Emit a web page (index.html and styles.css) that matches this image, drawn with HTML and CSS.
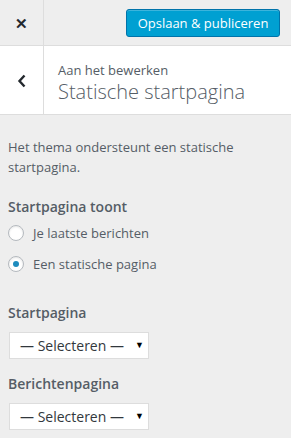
FILE: index.html
```html
<!DOCTYPE html>
<html lang="nl">
<head>
    <meta charset="UTF-8">
    <meta name="viewport" content="width=device-width, initial-scale=1.0">
    <title>Statische startpagina</title>
    <link rel="stylesheet" href="styles.css">
</head>
<body>
    <div class="customizer">
        <!-- Kop met sluiten en publiceren -->
        <div class="header">
            <div class="close">&#x2715;</div>
            <div class="header-actions">
                <button class="publish">Opslaan &amp; publiceren</button>
            </div>
        </div>

        <!-- Sectietitel -->
        <div class="section-title">
            <div class="back">
                <svg width="10" height="14" viewBox="0 0 10 14"><path d="M7.5 1.5 L2.5 7 L7.5 12.5" fill="none" stroke="#23282d" stroke-width="2.4"/></svg>
            </div>
            <div class="title-text">
                <span class="editing">Aan het bewerken</span>
                <h2>Statische startpagina</h2>
            </div>
        </div>

        <!-- Instellingen -->
        <div class="content">
            <p class="description">Het thema ondersteunt een statische startpagina.</p>

            <div class="control">
                <span class="control-title">Startpagina toont</span>
                <label class="radio"><span class="radio-dot"></span>Je laatste berichten</label>
                <label class="radio"><span class="radio-dot checked"></span>Een statische pagina</label>
            </div>

            <div class="control select-control">
                <span class="control-title">Startpagina</span>
                <div class="select">— Selecteren —<span class="arrow">&#9660;</span></div>
            </div>

            <div class="control select-control">
                <span class="control-title">Berichtenpagina</span>
                <div class="select">— Selecteren —<span class="arrow">&#9660;</span></div>
            </div>
        </div>
    </div>
</body>
</html>
```

FILE: styles.css
```css
body, html {
    margin: 0;
    padding: 0;
    font-family: "Open Sans", "Noto Sans", sans-serif;
    background-color: #eeeeee;
    color: #555d66;
    height: 100vh;
    overflow: hidden;
}

.customizer {
    display: flex;
    flex-direction: column;
}

/* Header */
.header {
    height: 45px;
    display: flex;
    align-items: center;
    border-bottom: 1px solid #dddddd;
}

.close {
    width: 43px;
    height: 45px;
    border-right: 1px solid #dddddd;
    display: flex;
    align-items: center;
    justify-content: center;
    font-size: 15px;
    font-weight: bold;
    color: #23282d;
}

.header-actions {
    flex: 1;
    display: flex;
    justify-content: flex-end;
    padding-right: 11px;
}

.publish {
    background-color: #00a0d2;
    border: 1px solid #0073aa;
    border-radius: 3px;
    color: #ffffff;
    font-family: "Open Sans", sans-serif;
    font-size: 13px;
    height: 28px;
    width: 154px;
    padding: 0;
    margin-top: 1px;
    box-shadow: inset 0 1px 0 rgba(120, 200, 230, 0.5);
}

/* Section title */
.section-title {
    display: flex;
    background-color: #ffffff;
    height: 68px;
    border-bottom: 1px solid #dddddd;
}

.back {
    width: 43px;
    border-right: 1px solid #dddddd;
    display: flex;
    align-items: center;
    justify-content: center;
    padding-top: 1px;
}

.title-text {
    padding: 16px 0 0 14px;
    display: flex;
    flex-direction: column;
}

.editing {
    font-size: 13px;
    line-height: 17px;
    color: #555d66;
}

.title-text h2 {
    margin: 0;
    font-size: 20px;
    font-weight: 300;
    line-height: 26px;
    color: #555d66;
}

/* Content */
.content {
    padding: 22px 8px 0 8px;
}

.description {
    margin: 0;
    font-size: 13px;
    line-height: 20px;
}

.control {
    display: flex;
    flex-direction: column;
    margin-top: 20px;
}

.control-title {
    font-size: 14px;
    font-weight: 600;
    line-height: 20px;
    margin-bottom: 6px;
}

.radio {
    display: flex;
    align-items: center;
    font-size: 13px;
    height: 20px;
    margin-bottom: 11px;
}

.radio-dot {
    width: 14px;
    height: 14px;
    border: 1px solid #b4b9be;
    border-radius: 50%;
    background-color: #ffffff;
    box-shadow: inset 0 1px 2px rgba(0, 0, 0, 0.1);
    margin-right: 9px;
    display: flex;
    align-items: center;
    justify-content: center;
}

.radio-dot.checked::after {
    content: "";
    width: 6px;
    height: 6px;
    border-radius: 50%;
    background-color: #1e8cbe;
}

.select-control {
    margin-top: 18px;
}

.select-control + .select-control {
    margin-top: 15px;
}

.select-control .control-title {
    margin-bottom: 9px;
}

.select {
    position: relative;
    height: 25px;
    margin-left: 1px;
    border: 1px solid #dddddd;
    background-color: #ffffff;
    font-size: 14px;
    line-height: 25px;
    color: #32373c;
    padding-left: 10px;
    box-sizing: content-box;
    width: 128px;
}

.select .arrow {
    position: absolute;
    right: 4px;
    top: -1px;
    font-size: 9px;
    color: #000000;
}
```
